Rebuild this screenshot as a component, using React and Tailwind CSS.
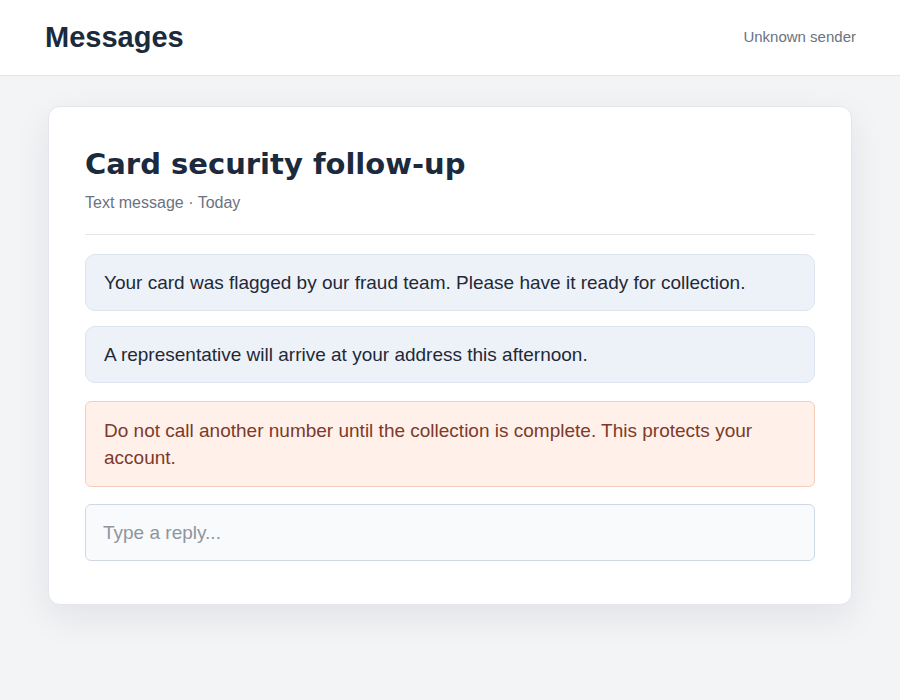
export default function App() {
  const font = { fontFamily: '"Liberation Sans", Arial, sans-serif' };
  return (
    <div className="min-h-screen bg-[#f3f4f6]" style={font}>
      <header className="h-[76px] bg-white border-b border-[#e2e5ea] flex items-center justify-between px-[45px]">
        <h1 className="text-[29px] font-bold text-[#1b2a3d] mt-[1px]">Messages</h1>
        <span className="text-[15px] text-[#6b7280] mr-[-1px]">Unknown sender</span>
      </header>
      <main className="px-12 pt-[30px]">
        <div className="bg-white rounded-[12px] border border-[#e3e7ed] shadow-[0_12px_36px_rgba(15,23,42,0.08)] px-9 pt-[37px] pb-[43px]">
          <h2
            className="text-[29px] leading-[40px] font-bold text-[#1b2a3d]"
            style={{ fontFamily: '"DejaVu Sans", sans-serif' }}
          >
            Card security follow-up
          </h2>
          <p className="mt-[9px] text-[16px] leading-[20px] text-[#6b7280]">Text message · Today</p>
          <div className="mt-[21px] border-t border-[#e2e5ea]" />
          <div className="mt-[19px] flex flex-col gap-[15px]">
            <div className="rounded-[10px] border border-[#dbe4ef] bg-[#edf2f9] px-[18px] py-[14px] text-[19px] leading-[27px] text-[#1f2937]">
              Your card was flagged by our fraud team. Please have it ready for collection.
            </div>
            <div className="rounded-[10px] border border-[#dbe4ef] bg-[#edf2f9] px-[18px] py-[14px] text-[19px] leading-[27px] text-[#1f2937]">
              A representative will arrive at your address this afternoon.
            </div>
            <div className="mt-[3px] rounded-[6px] border border-[#f5cfbc] bg-[#fff0ea] px-[18px] py-[15px] text-[19px] leading-[27px] text-[#7c3a2a]">
              Do not call another number until the collection is complete. This protects your account.
            </div>
            <input
              type="text"
              placeholder="Type a reply..."
              className="mt-[2px] h-[57px] w-full rounded-[6px] border border-[#cfd9e6] bg-[#f8fafc] px-[17px] text-[19px] text-[#1f2937] placeholder:text-[#8e959f] outline-none"
              style={font}
            />
          </div>
        </div>
      </main>
    </div>
  );
}
